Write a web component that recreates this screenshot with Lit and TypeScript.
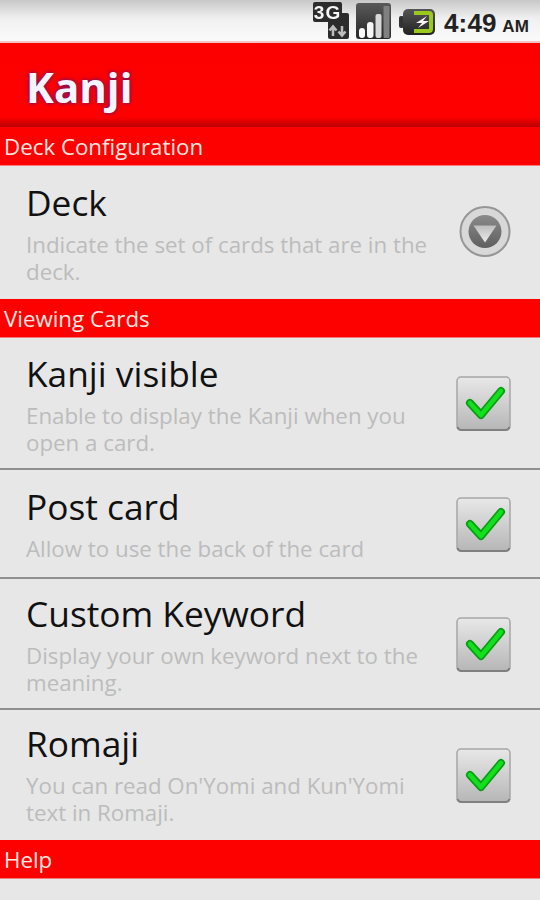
import { LitElement, css, html } from "lit";
import { customElement } from "lit/decorators.js";

type Pref = {
  title: string;
  summary: string;
  height: number;
  kind: "check" | "list";
  divider?: boolean;
  nudge?: number;
};

const deck: Pref[] = [
  {
    title: "Deck",
    summary: "Indicate the set of cards that are in the deck.",
    height: 133,
    kind: "list",
    nudge: 1,
  },
];

const viewing: Pref[] = [
  {
    title: "Kanji visible",
    summary: "Enable to display the Kanji when you open a card.",
    height: 132,
    kind: "check",
    divider: true,
    nudge: 2,
  },
  {
    title: "Post card",
    summary: "Allow to use the back of the card",
    height: 109,
    kind: "check",
    divider: true,
  },
  {
    title: "Custom Keyword",
    summary: "Display your own keyword next to the meaning.",
    height: 131,
    kind: "check",
    divider: true,
  },
  {
    title: "Romaji",
    summary: "You can read On'Yomi and Kun'Yomi text in Romaji.",
    height: 130,
    kind: "check",
    nudge: -2,
  },
];

const checkIcon = html`
  <svg class="widget check" width="58" height="58" viewBox="0 0 58 58">
    <defs>
      <linearGradient id="box" x1="0" y1="0" x2="0" y2="1">
        <stop offset="0" stop-color="#e8e8e8" />
        <stop offset="1" stop-color="#b6b6b6" />
      </linearGradient>
    </defs>
    <rect x="2" y="2" width="53" height="53" rx="4" fill="url(#box)" stroke="#a6a6a6" stroke-width="1.5" />
    <path d="M2.5 52c.5 2 2 3 4 3h44c2 0 3.5-1 4-3" fill="none" stroke="#808080" stroke-width="2" />
    <path d="M15 28l11 12 20-24" fill="none" stroke="#0b9c15" stroke-width="8" stroke-linecap="round" stroke-linejoin="round" />
    <path d="M15 28l11 12 20-24" fill="none" stroke="#12e01c" stroke-width="4.5" stroke-linecap="round" stroke-linejoin="round" />
  </svg>
`;

const listIcon = html`
  <svg class="widget list" width="54" height="54" viewBox="0 0 54 54">
    <defs>
      <linearGradient id="knob" x1="0" y1="0" x2="0" y2="1">
        <stop offset="0" stop-color="#8a8a8a" />
        <stop offset="1" stop-color="#5f5f5f" />
      </linearGradient>
      <linearGradient id="arrow" x1="0" y1="0" x2="0" y2="1">
        <stop offset="0" stop-color="#bdbdbd" />
        <stop offset="1" stop-color="#ececec" />
      </linearGradient>
    </defs>
    <circle cx="27" cy="25.500" r="24.500" fill="#d8d8d8" stroke="#969696" stroke-width="2" />
    <circle cx="27" cy="25.500" r="16.500" fill="url(#knob)" />
    <path d="M15.500 19.500h23L27 36.500z" fill="url(#arrow)" />
  </svg>
`;

@customElement("app-root")
export class AppRoot extends LitElement {
  static styles = css`
    :host {
      display: block;
      width: 540px;
      height: 900px;
      overflow: hidden;
      background: #e7e7e7;
      font-family: "Open Sans", "Noto Sans", sans-serif;
    }
    .status {
      height: 41px;
      display: flex;
      align-items: center;
      justify-content: flex-end;
      padding-right: 11px;
      background: linear-gradient(#c8c8c8, #f0f0f0 45%, #fafafa);
      border-bottom: 2px solid #f3c4c4;
    }
    .status svg {
      display: block;
      filter: blur(0.6px);
    }
    .three-g {
      margin-right: 7px;
    }
    .signal {
      margin-right: 8px;
    }
    .battery {
      margin: 2px 9px 0 0;
    }
    .clock {
      font-family: "Liberation Sans", sans-serif;
      font-size: 26px;
      font-weight: 700;
      color: #222;
      margin-top: 5px;
      letter-spacing: 0.2px;
      white-space: nowrap;
    }
    .clock small {
      margin-left: -2px;
      font-size: 17px;
      font-weight: 700;
    }
    .title {
      height: 84px;
      box-sizing: border-box;
      display: flex;
      align-items: center;
      padding: 2px 0 0 26px;
      background: linear-gradient(#fb0000, #ff0000 88%, #b80000);
      color: #f6f4ff;
      font-size: 42px;
      font-weight: 700;
      text-shadow: 0 0 4px #3a1a8a;
    }
    .section {
      height: 39px;
      box-sizing: border-box;
      padding: 1px 0 0 4px;
      display: flex;
      align-items: center;
      background: #fd0000;
      border-bottom: 1px solid #f47a7a;
      color: #ffe9e0;
      font-size: 22.3px;
    }
    .item {
      box-sizing: border-box;
      display: flex;
      align-items: center;
      justify-content: space-between;
      padding: 0 27px 0 26px;
      background: #e7e7e7;
    }
    .item.divider {
      border-bottom: 2px solid #8f8f8f;
    }
    .text {
      box-sizing: border-box;
      width: 410px;
    }
    .name {
      font-size: 35.3px;
      line-height: 43px;
      color: #111;
      white-space: nowrap;
    }
    .summary {
      font-size: 22.3px;
      line-height: 27px;
      margin-top: 7px;
      color: #bcbcbc;
    }
    .widget {
      flex: none;
      display: block;
      filter: blur(0.4px);
    }
    .check {
      margin-top: 2px;
    }
    .list {
      margin-right: 1px;
    }
  `;

  private renderPref(p: Pref) {
    const nudge = p.nudge ?? 0;
    const offset =
      nudge > 0 ? `padding-top: ${nudge}px` : `padding-bottom: ${-nudge}px`;
    return html`
      <div class="item ${p.divider ? "divider" : ""}" style="height: ${p.height}px">
        <div class="text" style=${offset}>
          <div class="name">${p.title}</div>
          <div class="summary">${p.summary}</div>
        </div>
        ${p.kind === "check" ? checkIcon : listIcon}
      </div>
    `;
  }

  render() {
    return html`
      <div class="status">
        <svg class="three-g" width="36" height="37" viewBox="0 0 36 37">
          <rect x="15" y="11" width="21" height="26" rx="2" fill="#2c2c2c" />
          <path d="M20 34v-9m-3.500 3.500l3.500-4 3.500 4M29 24v9m-3.500-3.500l3.500 4 3.500-4" fill="none" stroke="#bdbdbd" stroke-width="2.500" />
          <rect x="0" y="0" width="29" height="20" rx="2" fill="#2c2c2c" />
          <text x="14.500" y="17" text-anchor="middle" font-family="Liberation Sans, sans-serif" font-size="19" font-weight="700" letter-spacing="1" fill="#f6f6f6">3G</text>
        </svg>
        <svg class="signal" width="35" height="36" viewBox="0 0 35 36">
          <defs>
            <linearGradient id="sig" x1="0" y1="0" x2="0" y2="1">
              <stop offset="0" stop-color="#5a5a5a" />
              <stop offset="1" stop-color="#262626" />
            </linearGradient>
          </defs>
          <rect x="0" y="0" width="35" height="36" rx="3" fill="url(#sig)" />
          <rect x="3" y="25" width="6" height="10" rx="3" fill="#fafafa" />
          <rect x="11" y="19" width="6.500" height="16" rx="3" fill="#f6f6f6" />
          <rect x="19.500" y="11" width="6" height="24" rx="2" fill="#d8d8d8" />
          <rect x="27.500" y="3" width="6" height="32" rx="1" fill="#808080" />
        </svg>
        <svg class="battery" width="36" height="28" viewBox="0 0 36 28">
          <defs>
            <linearGradient id="cell" x1="0" y1="0" x2="0" y2="1">
              <stop offset="0" stop-color="#555" />
              <stop offset="1" stop-color="#222" />
            </linearGradient>
          </defs>
          <rect x="0" y="8" width="5" height="12" rx="2" fill="#333" />
          <rect x="4" y="1" width="32" height="26" rx="5" fill="url(#cell)" />
          <path d="M15 3h15a4 4 0 0 1 4 4v14a4 4 0 0 1-4 4H15v-4h15V7H15z" fill="#9ac81e" />
          <path d="M28 8l-11 7h6l-4 5 11-7h-6z" fill="#f6f6f6" />
        </svg>
        <div class="clock">4:49 <small>AM</small></div>
      </div>
      <div class="title">Kanji</div>
      <div class="section">Deck Configuration</div>
      ${deck.map((p) => this.renderPref(p))}
      <div class="section">Viewing Cards</div>
      ${viewing.map((p) => this.renderPref(p))}
      <div class="section">Help</div>
    `;
  }
}
